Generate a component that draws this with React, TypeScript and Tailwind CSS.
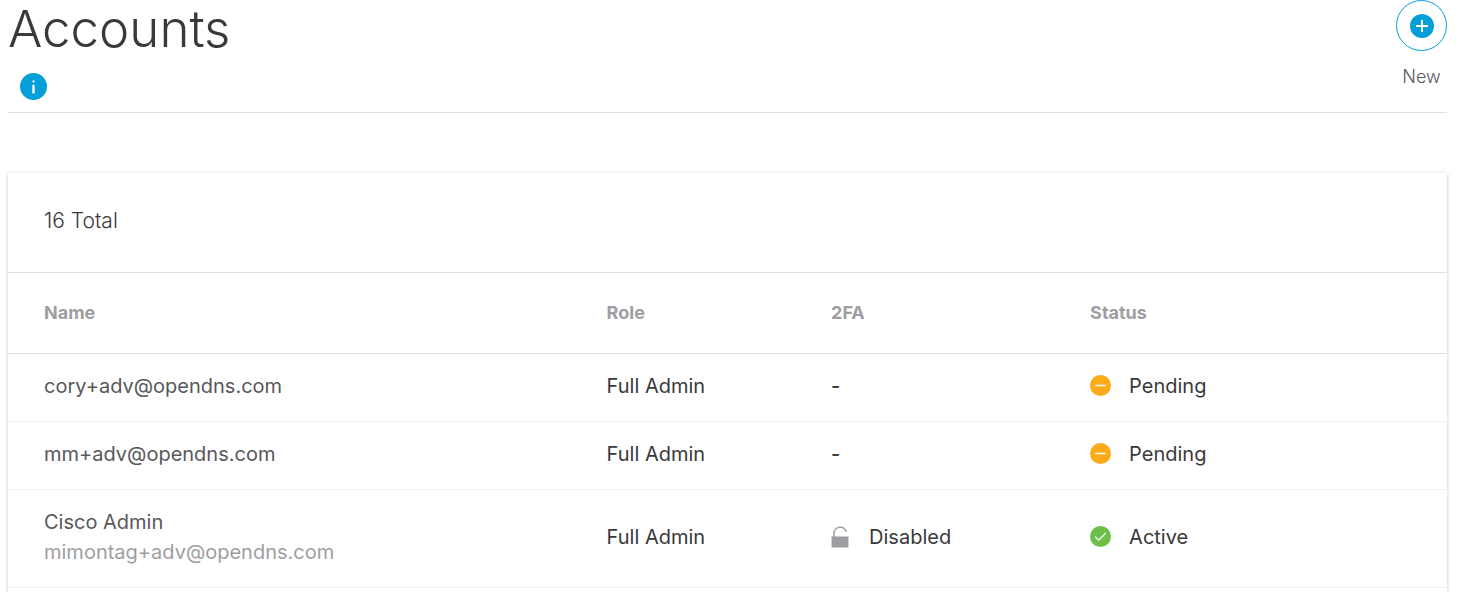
import React from 'react';

type Account = {
  name?: string;
  email: string;
  role: string;
  twoFactor: 'none' | 'disabled';
  status: 'Pending' | 'Active';
};

const accounts: Account[] = [
  { email: 'cory+adv@opendns.com', role: 'Full Admin', twoFactor: 'none', status: 'Pending' },
  { email: 'mm+adv@opendns.com', role: 'Full Admin', twoFactor: 'none', status: 'Pending' },
  {
    name: 'Cisco Admin',
    email: 'mimontag+adv@opendns.com',
    role: 'Full Admin',
    twoFactor: 'disabled',
    status: 'Active',
  },
];

const InfoIcon = () => (
  <svg className="w-[27px] h-[27px]" viewBox="0 0 27 27" aria-hidden="true">
    <circle cx="13.5" cy="13.5" r="13.5" fill="#049fd9" />
    <circle cx="13.5" cy="8.4" r="1.1" fill="#fff" />
    <rect x="12.3" y="11.6" width="2.4" height="9" rx="1.2" fill="#fff" />
  </svg>
);

const PlusIcon = () => (
  <svg className="w-6 h-6" viewBox="0 0 24 24" aria-hidden="true">
    <circle cx="12" cy="12" r="12" fill="#049fd9" />
    <path d="M12 6v12M6 12h12" stroke="#fff" strokeWidth="2" />
  </svg>
);

const UnlockedIcon = () => (
  <svg className="w-[18px] h-[22px]" viewBox="0 0 18 22" aria-hidden="true">
    <rect x="0.5" y="10.5" width="17" height="11" fill="#9e9ea2" />
    <path d="M3 11V7.2a6.2 6.2 0 0 1 12.2-1.4" fill="none" stroke="#9e9ea2" strokeWidth="1.5" />
  </svg>
);

const StatusIcon = ({ status }: { status: Account['status'] }) => (
  <svg className="w-[21px] h-[21px]" viewBox="0 0 21 21" aria-hidden="true">
    <circle cx="10.5" cy="10.5" r="10.5" fill={status === 'Active' ? '#6cc04a' : '#fbab18'} />
    {status === 'Active' ? (
      <path d="M5.2 10.8l3.6 3.4 7-7.2" fill="none" stroke="#fff" strokeWidth="1.2" />
    ) : (
      <path d="M6 10.5h9" stroke="#fff" strokeWidth="1.6" strokeLinecap="round" />
    )}
  </svg>
);

const App = () => {
  return (
    <main className="bg-white pl-2 pr-[11px] font-['Inter',sans-serif] text-[#39393b]">
      {/* Page header */}
      <header className="flex items-start justify-between border-b border-[#dfdfdf] h-[113px]">
        <div>
          <h1 className="text-[51px] leading-[58px] font-light">Accounts</h1>
          <button type="button" aria-label="About accounts" className="block ml-3 mt-[15px]">
            <InfoIcon />
          </button>
        </div>
        <button type="button" className="flex flex-col items-end text-lg font-light text-[#58585b]">
          <span className="flex items-center justify-center w-[51px] h-[51px] rounded-full border border-[#049fd9]">
            <PlusIcon />
          </span>
          <span className="w-[51px] mt-3 text-center">New</span>
        </button>
      </header>

      {/* Accounts table */}
      <section className="mt-[60px] pb-5 shadow-[0_1px_4px_rgba(0,0,0,0.22)]">
        <p className="px-9 pt-[34px] pb-[37px] text-[21px] leading-7 font-light border-b border-[#dfdfdf]">
          16 Total
        </p>
        <table className="w-full table-fixed border-collapse text-left text-xl">
          <thead>
            <tr className="h-[80px] border-b border-[#dfdfdf] text-lg text-[#9e9ea2]">
              <th className="w-[41.6%] pl-9 font-bold">Name</th>
              <th className="w-[15.6%] font-bold">Role</th>
              <th className="w-[18%] font-bold">2FA</th>
              <th className="font-bold">Status</th>
            </tr>
          </thead>
          <tbody>
            {accounts.map((account) => (
              <tr key={account.email} className="border-b border-[#f0f0f0] leading-[30px]">
                <td className="pl-9 pt-[17px] pb-5 text-[#58585b]">
                  {account.name && <div>{account.name}</div>}
                  <div className={account.name ? 'text-[#9e9ea2]' : ''}>{account.email}</div>
                </td>
                <td className="pt-[17px] pb-5">{account.role}</td>
                <td className="pt-[17px] pb-5">
                  {account.twoFactor === 'disabled' ? (
                    <div className="flex items-center gap-5">
                      <UnlockedIcon />
                      <span>Disabled</span>
                    </div>
                  ) : (
                    <span className="font-medium">-</span>
                  )}
                </td>
                <td className="pt-[17px] pb-5">
                  <div className="flex items-center gap-[18px]">
                    <StatusIcon status={account.status} />
                    <span>{account.status}</span>
                  </div>
                </td>
              </tr>
            ))}
          </tbody>
        </table>
      </section>
    </main>
  );
};

export default App;
